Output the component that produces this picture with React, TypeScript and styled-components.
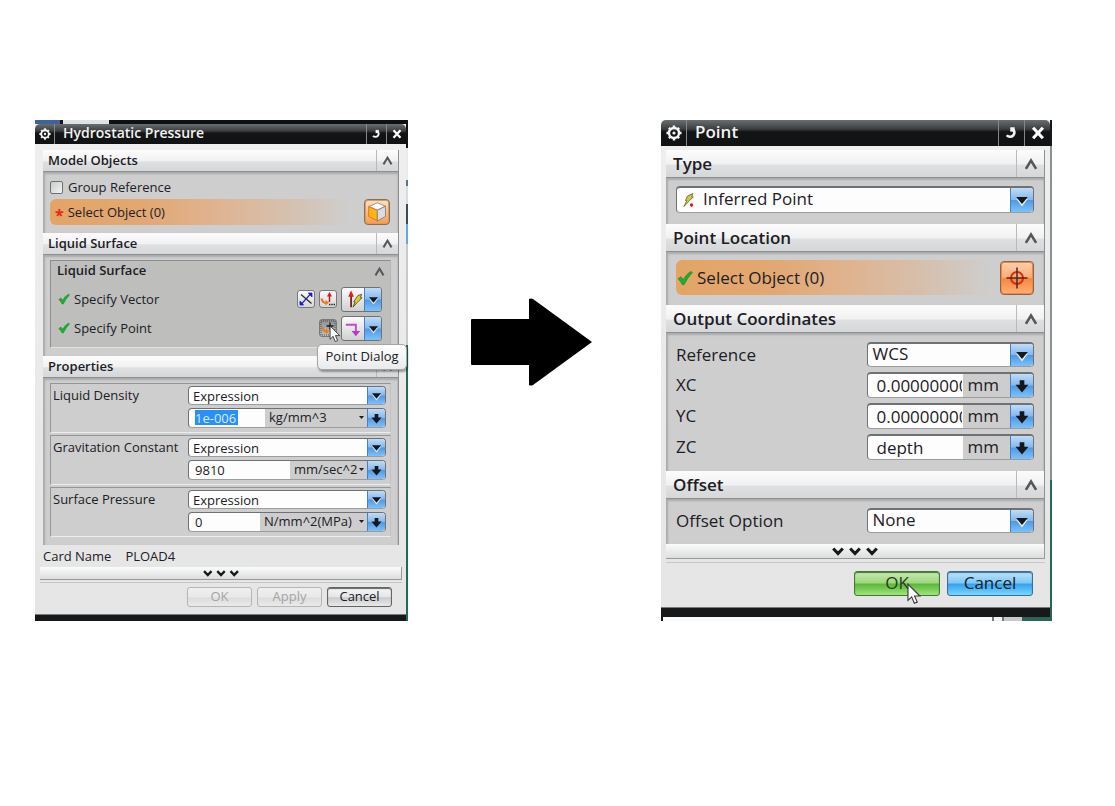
import React from "react";
import styled, { createGlobalStyle, css, ThemeProvider } from "styled-components";

const compact = {
  font: 13, title: 14, head: 13, titleBar: 20, titleCell: 20, headH: 22, headCell: 22, headPad: 5,
  arrow: 18, buttonW: 65, buttonH: 20, gap: 5, more: 13, fieldTop: 1, comboLine: 16, comboDrop: 0,
};
const large = {
  font: 17, title: 17, head: 17, titleBar: 26, titleCell: 26, headH: 28, headCell: 28, headPad: 7,
  arrow: 23, buttonW: 86, buttonH: 25, gap: 7, more: 15, fieldTop: 2, comboLine: 20, comboDrop: 2,
};

const GlobalStyle = createGlobalStyle`
  * { box-sizing: border-box; }
  body { margin: 0; background: #fff; }
  button, input, select { font: inherit; color: inherit; margin: 0; }
`;

const Stage = styled.main`
  display: flex;
  align-items: flex-start;
  gap: 63px;
  padding: 120px 63px 40px 35px;
  font-family: "Open Sans", "Noto Sans", sans-serif;
  color: #1c2026;
`;

const ArrowCell = styled.div`
  flex: 0 0 127px;
  padding-top: 178px;
  svg { display: block; }
`;

const Frame = styled.div<{ $grow: number; $wide?: boolean }>`
  flex: ${p => p.$grow} 1 0;
  min-width: 0;
  font-size: ${p => p.theme.font}px;
  line-height: 18px;
  padding-right: 2px;
  background: ${p => p.$wide
    ? "linear-gradient(#17181a 0 26px, #8b9092 26px 360px, #1f6b58 360px 480px, #2b6357 480px)"
    : "linear-gradient(#141414 0 28px, #e8ebee 28px 60px, #5b7392 60px 66px, #d9dcdf 66px 84px, #3d4a58 84px 104px, #62a8e2 104px 124px, #c5cacd 124px 225px, #1f6b58 225px)"};
`;

const BackStrip = styled.div`
  height: 4px;
  background: linear-gradient(90deg, #40629c 0 25px, #151515 25px 28px, #dfe1e2 28px 74px, #0c1114 74px);
`;

const BackEdge = styled.div`
  height: 4px;
  margin-right: -2px;
  border-left: 2px solid #151515;
  background: linear-gradient(270deg, #2b6357 0 30px, #c9cacc 30px 48px, #777a7c 48px 50px, #f4f4f4 50px 58px, #777a7c 58px 60px, #fafafa 60px);
`;

const Window = styled.section<{ $rim: number }>`
  background: linear-gradient(#efefef, #e5e5e5);
  border-bottom: ${p => p.$rim}px solid #171819;
  box-shadow: inset 0 -1px 0 #77797a;
`;

const TitleBar = styled.header`
  display: flex;
  align-items: stretch;
  height: ${p => p.theme.titleBar}px;
  color: #fff;
  background: linear-gradient(#6b6e70 0, #3b3d3f 35%, #141516 45%, #101112 100%);
  border-radius: 5px 5px 0 0;
`;

const Title = styled.h1`
  flex: 1;
  margin: 0;
  padding-left: 8px;
  font-size: ${p => p.theme.title}px;
  line-height: ${p => p.theme.titleBar - 2}px;
  font-weight: 600;
  color: #f2f2f2;
`;

const TitleButton = styled.button<{ $side: "left" | "right" }>`
  display: flex;
  align-items: center;
  justify-content: center;
  width: ${p => p.theme.titleCell}px;
  padding: 0;
  border: 0 solid #85888a;
  border-${p => (p.$side === "left" ? "right" : "left")}-width: 1px;
  background: none;
`;

const Body = styled.form<{ $pad: string }>`
  padding: ${p => p.$pad};
`;

const Stack = styled.div`
  border-right: 1px solid #8d8f90;
`;

const Head = styled.h2`
  display: flex;
  align-items: stretch;
  margin: 0;
  height: ${p => p.theme.headH}px;
  padding-left: ${p => p.theme.headPad}px;
  font-size: ${p => p.theme.head}px;
  line-height: ${p => p.theme.headH - 1}px;
  font-weight: 600;
  background: linear-gradient(#fcfcfc 0, #f1f1f1 52%, #dfe0e1 56%, #d6d7d8 100%);
  border-bottom: 1px solid #8e8f90;
  span { flex: 1; }
`;

const Collapse = styled.button<{ $plain?: boolean }>`
  display: flex;
  align-items: center;
  justify-content: center;
  width: ${p => p.theme.headCell}px;
  padding: 0;
  border: 0;
  border-left: ${p => (p.$plain ? "0" : "1px solid #b9babb")};
  background: none;
`;

const Panel = styled.div<{ $pad: string; $gap?: number }>`
  display: flex;
  flex-direction: column;
  gap: ${p => p.$gap ?? 0}px;
  padding: ${p => p.$pad};
  background: #cecece;
  box-shadow: inset 2px 2px 2px #a9aaab, inset -1px 0 1px #bcbcbc;
`;

const CheckLabel = styled.label`
  display: flex;
  align-items: center;
  gap: 5px;
  height: 18px;
  input {
    appearance: none;
    width: 13px;
    height: 13px;
    border: 1px solid #6d7073;
    border-radius: 2px;
    background: linear-gradient(135deg, #c9cacb, #f4f4f4);
  }
`;

const Pill = styled.div<{ $height: number; $inset: number }>`
  display: flex;
  align-items: center;
  height: ${p => p.$height}px;
  padding-left: ${p => p.$inset}px;
  gap: 4px;
  border-radius: 6px;
  font-weight: 500;
  background: linear-gradient(90deg, #e3a466 0, #e2a873 28%, #dfb492 50%, #d6bfab 68%, #cecece 88%);
  > span { flex: 1; }
`;

const Star = styled.b`
  color: #e02a12;
  font-size: 16px;
  line-height: 12px;
  padding-top: 5px;
`;

const PickButton = styled.button<{ $size: number; $hot?: boolean }>`
  display: flex;
  align-items: center;
  justify-content: center;
  width: ${p => p.$size}px;
  height: ${p => p.$size}px;
  padding: 0;
  border: 1px solid ${p => (p.$hot ? "#9c5f3d" : "#84705c")};
  box-shadow: inset 0 0 0 1px ${p => (p.$hot ? "#e58a50" : "#d99a63")};
  border-radius: 4px;
  background: ${p =>
    p.$hot
      ? "linear-gradient(#fdd2ae 0, #fbab74 48%, #f8863f 52%, #fdb176 100%)"
      : "linear-gradient(#fde3c8 0, #fbc089 50%, #f99a45 100%)"};
`;

const Inset = styled.div`
  padding: 0 8px 5px 7px;
  border: 1px solid #8d8e8f;
  border-right-color: #b4b4b4;
  border-bottom-color: #e2e2e2;
  background: #bebebd;
`;

const InsetHead = styled.h3`
  display: flex;
  height: 24px;
  margin: 0 -1px 0 -1px;
  font-size: ${p => p.theme.head}px;
  line-height: 18px;
  font-weight: 600;
  span { flex: 1; }
  button { height: 20px; width: 20px; margin-right: -6px; }
`;

const SpecRow = styled.div`
  display: flex;
  align-items: center;
  gap: 4px;
  height: 28px;
  & + & { margin-top: 1px; }
  > span { flex: 1; }
`;

const ToolButton = styled.button<{ $active?: boolean }>`
  position: relative;
  display: flex;
  align-items: center;
  justify-content: center;
  width: 18px;
  height: 18px;
  padding: 0;
  border: 1px solid #77797b;
  border-radius: 3px;
  background: ${p => (p.$active ? "linear-gradient(#8f9092, #bfc0c1)" : "linear-gradient(#fafafa, #d5d6d7)")};
`;

const SplitButton = styled.button`
  display: flex;
  width: 41px;
  height: 25px;
  padding: 0;
  border: 1px solid #707376;
  border-radius: 3px;
  overflow: hidden;
  background: linear-gradient(#fbfbfb 0, #e6e6e7 50%, #cfd0d1 100%);
  > svg { flex: 1; min-width: 0; height: 23px; }
`;

const blue = css`
  background: linear-gradient(#bfdcf7 0, #86b8ee 48%, #4f9ae6 52%, #7fc0f8 100%);
`;

const ArrowBox = styled.span<{ $fixed?: number }>`
  display: flex;
  align-items: center;
  justify-content: center;
  flex: none;
  width: ${p => p.$fixed ?? p.theme.arrow}px;
  align-self: stretch;
  border-left: 1px solid #4a7fc0;
  border-radius: 0 2px 2px 0;
  pointer-events: none;
  ${blue}
`;

const ArrowButton = styled.button`
  display: flex;
  align-items: center;
  justify-content: center;
  flex: none;
  width: ${p => p.theme.arrow}px;
  align-self: stretch;
  padding: 0;
  border: 0;
  border-left: 1px solid #4a7fc0;
  border-radius: 0 2px 2px 0;
  ${blue}
`;

const Field = styled.div<{ $height: number }>`
  display: flex;
  align-items: center;
  height: ${p => p.$height}px;
  border: 1px solid #6f7274;
  border-top-width: ${p => p.theme.fieldTop}px;
  border-bottom-color: #9a9c9e;
  border-radius: 4px;
  background: #fdfdfd;
  overflow: hidden;
`;

const Combo = styled.select<{ $pad?: number }>`
  appearance: none;
  flex: 1;
  min-width: 0;
  height: 100%;
  padding: 0 0 ${p => p.theme.comboDrop}px ${p => p.$pad ?? 4}px;
  line-height: ${p => p.theme.comboLine}px;
  border: 0;
  background: transparent;
  outline: none;
`;

const ValueCell = styled.span<{ $width: number }>`
  flex: none;
  display: flex;
  width: ${p => p.$width}px;
  height: 100%;
  padding: 1px 1px 2px ${p => (p.theme.font > 14 ? 8 : 6)}px;
  overflow: hidden;
`;

const Value = styled.input<{ $selected?: boolean }>`
  width: ${p => (p.$selected ? "43px" : "100%")};
  min-width: 0;
  height: 100%;
  padding: 0;
  border: 0;
  outline: none;
  line-height: 15px;
  background: ${p => (p.$selected ? "#2a90f7" : "transparent")};
  color: ${p => (p.$selected ? "#d8ecff" : "inherit")};
`;

const Unit = styled.span`
  display: flex;
  align-items: center;
  flex: 1;
  min-width: 0;
  height: 100%;
  padding: 0 2px 1px 4px;
  background: #cdcdcd;
`;

const UnitSelect = styled.select`
  appearance: none;
  flex: 1;
  min-width: 0;
  padding: 0;
  height: 100%;
  line-height: 17px;
  border: 0;
  background: transparent;
`;

const PropGroup = styled.fieldset`
  display: grid;
  grid-template-columns: 135fr 198fr;
  margin: 0;
  min-width: 0;
  padding: 2px 4px 4px 2px;
  border: 1px solid #949596;
  border-right-color: #c2c2c2;
  border-bottom-color: #ededed;
`;

const PropLabel = styled.label`
  white-space: nowrap;
`;

const Fields = styled.div`
  display: flex;
  flex-direction: column;
  gap: 3px;
  min-width: 0;
`;

const CoordRow = styled.div`
  display: grid;
  grid-template-columns: 192fr 167fr;
  align-items: center;
  label { line-height: 22px; }
`;

const CardRow = styled.dl`
  display: flex;
  gap: 14px;
  margin: 0;
  height: 22px;
  line-height: 22px;
  dd { margin: 0; }
`;

const More = styled.button<{ $bleed: string }>`
  display: flex;
  align-items: center;
  justify-content: center;
  width: auto;
  align-self: stretch;
  height: ${p => p.theme.more}px;
  margin: ${p => p.$bleed};
  padding: 0;
  border: 0;
  border-bottom: 1px solid #97999a;
  border-right: 1px solid #97999a;
  background: linear-gradient(#fbfbfb, #dcdddd);
`;

const Footer = styled.div<{ $pad: string; $bleed: string }>`
  display: flex;
  justify-content: flex-end;
  gap: ${p => p.theme.gap}px;
  margin: ${p => p.$bleed};
  padding: ${p => p.$pad};
  border-top: 1px solid #c6c7c8;
`;

const Column = styled.div`
  display: flex;
  flex-direction: column;
`;

const tones = {
  off: "linear-gradient(#efefef 0, #e9e9e9 50%, #dcdcdc 55%, #eaeaea 100%)",
  grey: "linear-gradient(#f6f6f6 0, #e6e6e6 48%, #cbcccd 54%, #e9e9e9 100%)",
  green: "linear-gradient(#cbe8b4 0, #9fd77f 46%, #5cb93c 54%, #a2e27e 100%)",
  blue: "linear-gradient(#bfe2f8 0, #82c8f5 46%, #35a3ee 54%, #78d8fc 100%)",
};
const edges = { off: "#b4b5b6", grey: "#626466", green: "#3f7a34", blue: "#3a6f9d" };

const Push = styled.button<{ $tone: keyof typeof tones }>`
  position: relative;
  width: ${p => p.theme.buttonW}px;
  height: ${p => p.theme.buttonH}px;
  padding: 0 0 2px;
  line-height: ${p => p.theme.buttonH - 6}px;
  border: 1px solid ${p => edges[p.$tone]};
  box-shadow: ${p => (p.$tone === "off" ? "none" : `inset 0 1px 1px ${edges[p.$tone]}`)};
  border-radius: 3px;
  background: ${p => tones[p.$tone]};
  color: ${p => (p.$tone === "off" ? "#a3a4a5" : p.$tone === "green" ? "#24401c" : "#15202b")};
  font-weight: ${p => (p.$tone === "grey" || p.$tone === "blue" ? 500 : 400)};
`;

const PointerSpot = styled.span<{ $x: number; $y: number }>`
  position: absolute;
  left: ${p => p.$x}px;
  top: ${p => p.$y}px;
  z-index: 3;
  pointer-events: none;
  svg { display: block; }
`;

const Tooltip = styled.span`
  position: absolute;
  top: 24px;
  left: -3px;
  z-index: 2;
  width: 90px;
  height: 26px;
  line-height: 23px;
  text-align: center;
  white-space: nowrap;
  border: 1px solid #a2a4a6;
  border-radius: 5px;
  background: linear-gradient(#ffffff, #e9eaec);
  box-shadow: 1px 2px 2px rgba(0, 0, 0, 0.35);
`;

const Gear = ({ size }: { size: number }) => (
  <svg width={size} height={size} viewBox="0 0 14 14" fill="none" stroke="#f4f4f4">
    <circle cx="7" cy="7" r="4.400" strokeWidth="2.100" />
    <circle cx="7" cy="7" r="1.400" fill="#f4f4f4" stroke="none" />
    <path d="M7 .4v2M7 11.600v2M.4 7h2M11.600 7h2M2.500 2.500l1.200 1.200M10.300 10.300l1.200 1.200M11.500 2.500l-1.200 1.200M3.700 10.300l-1.200 1.200" strokeWidth="2.200" />
  </svg>
);

const Loop = ({ size }: { size: number }) => (
  <svg width={size} height={size} viewBox="0 0 12 12" fill="none" stroke="#f4f4f4" strokeWidth="2.100">
    <path d="M6.800 2.200A3.500 3.500 0 1 1 2.200 7.400" />
    <path d="M5 1h3.500v3.500H5z" fill="#f4f4f4" stroke="none" />
  </svg>
);

const Cross = ({ size }: { size: number }) => (
  <svg width={size} height={size} viewBox="0 0 12 12" stroke="#fff" strokeWidth="2.700">
    <path d="M1.800 1.500l8.400 9M10.200 1.500l-8.400 9" />
  </svg>
);

const Caret = ({ size }: { size: number }) => (
  <svg width={size} height={size} viewBox="0 0 12 12" fill="none" stroke="#55575a" strokeWidth="2.200">
    <path d="M1.600 10.200L6 3l4.400 7.200" />
  </svg>
);

const Triangle = ({ size }: { size: number }) => (
  <svg width={size} height={size} viewBox="0 0 12 12">
    <path d="M1 5h10L6 11.500z" fill="#e4f2ff" />
    <path d="M1 3.500h10L6 9.500z" fill="#15181c" />
  </svg>
);

const DownArrow = ({ size }: { size: number }) => (
  <svg width={size} height={size} viewBox="0 0 12 12" fill="#14171b">
    <path d="M4 1h4v4h3.500L6 11.500L.5 5H4z" />
  </svg>
);

const Dot = () => (
  <svg width="7" height="5" viewBox="0 0 7 5" aria-hidden="true">
    <path d="M1 1h5L3.500 4z" fill="#1a1d20" />
  </svg>
);

const Check = ({ size }: { size: number }) => (
  <svg width={size} height={size} viewBox="0 0 12 12">
    <path d="M.8 6.500L3 5l1.700 2.300Q7 3 10.500 1L11.500 2Q8 5.500 5.300 11H4Q2.800 8.500.8 6.500z" fill="#1fae35" stroke="#178c2a" strokeWidth=".5" />
  </svg>
);

const Pointer = ({ w, h }: { w: number; h: number }) => (
  <svg width={w} height={h} viewBox="0 0 12 19">
    <path d="M.8 1v14l3.200-3l2.300 5.500l2.500-1L6.500 11.200H11z" fill="#fff" stroke="#3c3c3c" strokeWidth="1" />
  </svg>
);

const Cube = () => (
  <svg width="20" height="20" viewBox="0 0 19 19" strokeWidth=".8" strokeLinejoin="round">
    <path d="M9.800 .8L17.600 4L9.800 7.800L1.600 4.400z" fill="#fff" stroke="#8d8078" />
    <path d="M1.600 4.400L9.800 7.800v10.200L1.600 13.800z" fill="#fdb515" stroke="#e06a1a" />
    <path d="M9.800 7.800L17.600 4V13.800l-7.800 4.200z" fill="#d9dbe2" stroke="#857a74" />
  </svg>
);

const Target = () => (
  <svg width="24" height="24" viewBox="0 0 24 24" fill="none">
    <circle cx="12" cy="12" r="6" stroke="#dd2b12" strokeWidth="2" />
    <path d="M12 1.500v21M1.500 12h21" stroke="#4a2a26" strokeWidth="1.500" />
  </svg>
);

const Reverse = () => (
  <svg width="14" height="14" viewBox="0 0 14 14" fill="none">
    <path d="M2 2.500l10.500 9" stroke="#26262e" strokeWidth="1.200" />
    <path d="M12 1.500L2 12.500" stroke="#2626b8" strokeWidth="1.200" />
    <path d="M9.500 1H13v4zM1 9v4h3.500z" fill="#1a1ad2" stroke="#1a1ad2" strokeWidth=".8" />
  </svg>
);

const VectorDialog = () => (
  <svg width="16" height="16" viewBox="0 0 16 16" fill="none">
    <path d="M9.500 11V4" stroke="#c81414" strokeWidth="1.500" />
    <path d="M9.500 1L12 5.500H7z" fill="#e01818" />
    <path d="M1.500 7.500q1 4.500 5 4.500" stroke="#ee7a1c" strokeWidth="2.200" />
    <path d="M5.500 9v5.500L9 11.500z" fill="#ee7a1c" />
    <path d="M9 13.500h6" stroke="#222" strokeWidth="1.400" strokeDasharray="1.400 .9" />
  </svg>
);

const PointDialogIcon = () => (
  <svg width="16" height="16" viewBox="0 0 16 16" fill="none">
    <rect x="1" y="1" width="14" height="14" stroke="#333" strokeWidth=".8" strokeDasharray="1 1" />
    <path d="M10 2.500v7M6.500 6h7" stroke="#15181a" strokeWidth="1.300" />
    <path d="M2.500 7q.5 4.500 4 4.500" stroke="#ee7a1c" strokeWidth="2.200" />
    <path d="M6 8.500V14l3-2.500z" fill="#ee7a1c" />
  </svg>
);

const InferredVector = () => (
  <svg viewBox="0 0 23 23" fill="none">
    <path d="M9.500 19.500V7" stroke="#7a1717" strokeWidth="1.800" />
    <path d="M9.500 2l3 6.500h-6z" fill="#e31b1b" />
    <path d="M16.500 7.500l4-1.500l-1.300 3.700h1.800L16 14.500L11.500 19.500l2.200-5.500h-1.500z" fill="#dcc93c" stroke="#57511c" strokeWidth=".9" />
  </svg>
);

const StepVector = () => (
  <svg viewBox="0 0 23 23" fill="none">
    <path d="M4 7.500h10.500V15" stroke="#c04ac8" strokeWidth="2" />
    <path d="M10 14h9l-4.500 5.500z" fill="#b43cbe" />
  </svg>
);

const InferredPoint = () => (
  <svg width="14" height="18" viewBox="0 0 14 18">
    <path d="M5.500 5l5.500-2.500l-1.300 3.500h1.600L7.500 9.500L2 15.500L4.800 9.500H3.500z" fill="#cfc653" stroke="#66611f" strokeWidth=".8" />
    <circle cx="9.500" cy="14" r="1.700" fill="#dc1c1c" />
  </svg>
);

const Chevrons = ({ w, h }: { w: number; h: number }) => (
  <svg width={w} height={h} viewBox="0 0 46 9" fill="none" stroke="#17191b" strokeWidth="3">
    <path d="M1.200 1.500L6 6.500l4.800-5M18.200 1.500l4.800 5l4.800-5M35.200 1.500l4.800 5l4.800-5" />
  </svg>
);

function Bar({ text, icon }: { text: string; icon: number }) {
  return (
    <TitleBar>
      <TitleButton type="button" $side="left" aria-label="Options"><Gear size={icon} /></TitleButton>
      <Title>{text}</Title>
      <TitleButton type="button" $side="right" aria-label="Reset"><Loop size={icon - 1} /></TitleButton>
      <TitleButton type="button" $side="right" aria-label="Close"><Cross size={icon - 2} /></TitleButton>
    </TitleBar>
  );
}

function SectionHead({ text, size = 11 }: { text: string; size?: number }) {
  return (
    <Head>
      <span>{text}</span>
      <Collapse type="button" aria-label={`Collapse ${text}`}><Caret size={size} /></Collapse>
    </Head>
  );
}

type Prop = { id: string; label: string; value: string; unit: string; width: number; selected?: boolean };

const properties: Prop[] = [
  { id: "density", label: "Liquid Density", value: "1e-006", unit: "kg/mm^3", width: 76, selected: true },
  { id: "gravity", label: "Gravitation Constant", value: "9810", unit: "mm/sec^2", width: 101 },
  { id: "pressure", label: "Surface Pressure", value: "0", unit: "N/mm^2(MPa)", width: 71 },
];

function Property({ id, label, value, unit, width, selected }: Prop) {
  return (
    <PropGroup>
      <PropLabel htmlFor={id}>{label}</PropLabel>
      <Fields>
        <Field $height={19}>
          <Combo id={id}><option>Expression</option></Combo>
          <ArrowBox><Triangle size={11} /></ArrowBox>
        </Field>
        <Field $height={20}>
          <ValueCell $width={width}>
            <Value aria-label={`${label} value`} defaultValue={value} $selected={selected} />
          </ValueCell>
          <Unit>
            <UnitSelect aria-label={`${label} unit`}><option>{unit}</option></UnitSelect>
            <Dot />
          </Unit>
          <ArrowButton type="button" aria-label={`${label} options`}><DownArrow size={11} /></ArrowButton>
        </Field>
      </Fields>
    </PropGroup>
  );
}

function PressureDialog() {
  return (
    <Frame $grow={373}>
      <BackStrip />
      <Window $rim={6}>
        <Bar text="Hydrostatic Pressure" icon={12} />
        <Body $pad="6px 7px 8px 8px">
          <Stack>
            <SectionHead text="Model Objects" />
            <Panel $pad="6px 8px 8px 7px" $gap={3}>
              <CheckLabel><input type="checkbox" />Group Reference</CheckLabel>
              <Pill $height={26} $inset={5}>
                <Star>*</Star>
                <span>Select Object (0)</span>
                <PickButton type="button" $size={26} aria-label="Select object"><Cube /></PickButton>
              </Pill>
            </Panel>
            <SectionHead text="Liquid Surface" />
            <Panel $pad="5px 7px 8px 7px">
              <Inset>
                <InsetHead>
                  <span>Liquid Surface</span>
                  <Collapse type="button" $plain aria-label="Collapse group"><Caret size={11} /></Collapse>
                </InsetHead>
                <SpecRow>
                  <Check size={12} />
                  <span>Specify Vector</span>
                  <ToolButton type="button" aria-label="Reverse direction"><Reverse /></ToolButton>
                  <ToolButton type="button" aria-label="Vector dialog"><VectorDialog /></ToolButton>
                  <SplitButton type="button" aria-label="Inferred vector">
                    <InferredVector /><ArrowBox $fixed={17}><Triangle size={11} /></ArrowBox>
                  </SplitButton>
                </SpecRow>
                <SpecRow>
                  <Check size={12} />
                  <span>Specify Point</span>
                  <ToolButton type="button" $active aria-label="Point dialog" aria-describedby="tip">
                    <PointDialogIcon />
                    <PointerSpot $x={9} $y={5}><Pointer w={12} h={18} /></PointerSpot>
                    <Tooltip id="tip" role="tooltip">Point Dialog</Tooltip>
                  </ToolButton>
                  <SplitButton type="button" aria-label="Inferred point">
                    <StepVector /><ArrowBox $fixed={17}><Triangle size={11} /></ArrowBox>
                  </SplitButton>
                </SpecRow>
              </Inset>
            </Panel>
            <SectionHead text="Properties" />
            <Panel $pad="5px 7px 8px 7px" $gap={2}>
              {properties.map(p => <Property key={p.id} {...p} />)}
            </Panel>
          </Stack>
          <CardRow><dt>Card Name</dt><dd>PLOAD4</dd></CardRow>
          <Column>
            <More type="button" $bleed="0 -3px 2px" aria-label="Show more"><Chevrons w={36} h={7} /></More>
            <Footer $bleed="0 -3px" $pad="4px 10px 0 0">
              <Push type="button" $tone="off" disabled>OK</Push>
              <Push type="button" $tone="off" disabled>Apply</Push>
              <Push type="button" $tone="grey">Cancel</Push>
            </Footer>
          </Column>
        </Body>
      </Window>
    </Frame>
  );
}

function PointDialog() {
  return (
    <Frame $grow={391} $wide>
      <Window $rim={9}>
        <Bar text="Point" icon={16} />
        <Body $pad="4px 5px 12px 5px">
          <Stack>
            <SectionHead text="Type" size={14} />
            <Panel $pad="8px 10px 11px 10px">
              <Field $height={27}>
                <PointIcon><InferredPoint /></PointIcon>
                <Combo aria-label="Type" $pad={7}><option>Inferred Point</option></Combo>
                <ArrowBox><Triangle size={14} /></ArrowBox>
              </Field>
            </Panel>
            <SectionHead text="Point Location" size={14} />
            <Panel $pad="8px 10px 10px 10px">
              <Pill $height={35} $inset={1}>
                <Check size={16} />
                <span>Select Object (0)</span>
                <PickButton type="button" $size={34} $hot aria-label="Select object"><Target /></PickButton>
              </Pill>
            </Panel>
            <SectionHead text="Output Coordinates" size={14} />
            <Panel $pad="9px 10px 11px 10px" $gap={5}>
              <CoordRow>
                <label htmlFor="ref">Reference</label>
                <Field $height={25}>
                  <Combo id="ref"><option>WCS</option></Combo>
                  <ArrowBox><Triangle size={14} /></ArrowBox>
                </Field>
              </CoordRow>
              {[["XC", "0.0000000000"], ["YC", "0.0000000000"], ["ZC", "depth"]].map(([name, value]) => (
                <CoordRow key={name}>
                  <label htmlFor={name}>{name}</label>
                  <Field $height={26}>
                    <ValueCell $width={95}><Value id={name} defaultValue={value} /></ValueCell>
                    <Unit>mm</Unit>
                    <ArrowButton type="button" aria-label={`${name} options`}><DownArrow size={14} /></ArrowButton>
                  </Field>
                </CoordRow>
              ))}
            </Panel>
            <SectionHead text="Offset" size={14} />
            <Panel $pad="9px 10px 11px 10px">
              <CoordRow>
                <label htmlFor="offset">Offset Option</label>
                <Field $height={25}>
                  <Combo id="offset"><option>None</option></Combo>
                  <ArrowBox><Triangle size={14} /></ArrowBox>
                </Field>
              </CoordRow>
            </Panel>
          </Stack>
          <Column>
            <More type="button" $bleed="0 0 3px" aria-label="Show more"><Chevrons w={46} h={9} /></More>
            <Footer $bleed="0" $pad="8px 12px 0 0">
              <Push type="button" $tone="green">
                OK
                <PointerSpot $x={52} $y={11}><Pointer w={14} h={22} /></PointerSpot>
              </Push>
              <Push type="button" $tone="blue">Cancel</Push>
            </Footer>
          </Column>
        </Body>
      </Window>
      <BackEdge />
    </Frame>
  );
}

const PointIcon = styled.span`
  display: flex;
  padding-left: 5px;
`;

export default function App() {
  return (
    <>
      <GlobalStyle />
      <Stage>
        <ThemeProvider theme={compact}><PressureDialog /></ThemeProvider>
        <ArrowCell>
          <svg width="121" height="88" viewBox="0 0 121 88" aria-hidden="true">
            <path d="M1 21h57V1q2-1 4 0l59 43l-59 43q-2 1-4 0V67H1q-1 0-1-1V22q0-1 1-1z" fill="#000" />
          </svg>
        </ArrowCell>
        <ThemeProvider theme={large}><PointDialog /></ThemeProvider>
      </Stage>
    </>
  );
}
